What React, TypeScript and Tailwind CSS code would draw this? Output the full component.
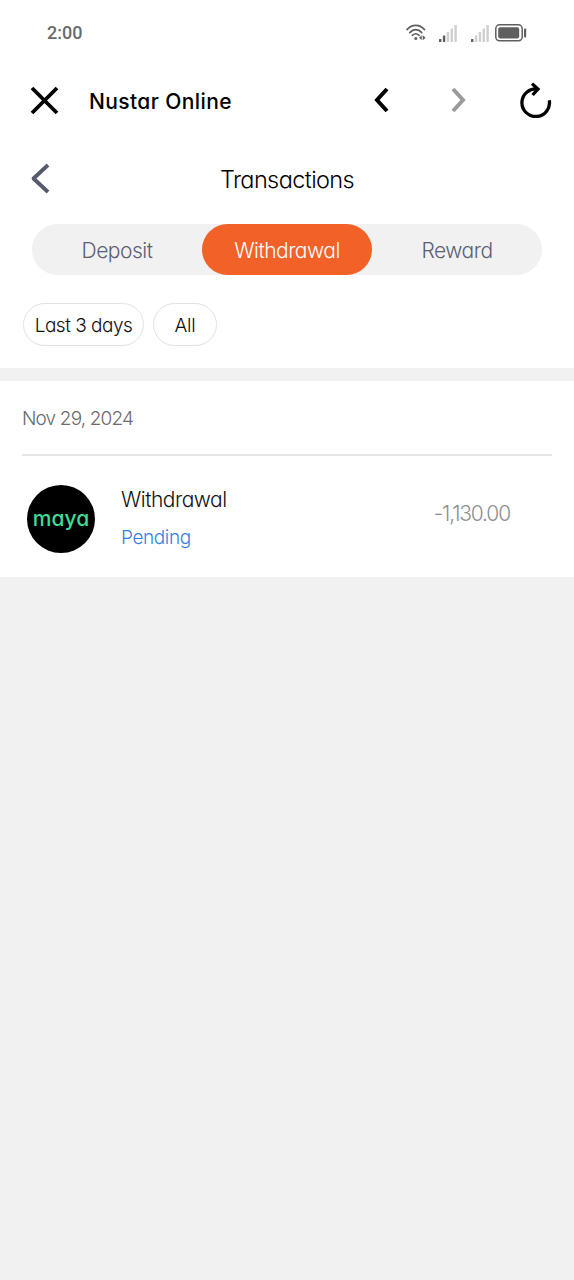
import { useState } from "react";
import clsx from "clsx";

const TABS = ["Deposit", "Withdrawal", "Reward"];

function SignalIcon({ active }: { active: number }) {
    const bars = [3, 6.5, 10, 13.5, 17];
    return (
        <svg width="18" height="17" viewBox="0 0 18 17">
            {bars.map((h, i) => (
                <rect
                    key={h}
                    x={i * 3.85}
                    y={17 - h}
                    width="2.4"
                    height={h}
                    rx="0.6"
                    fill={i < active ? "#5f5f5f" : "#cfcfcf"}
                />
            ))}
        </svg>
    );
}

function WifiIcon() {
    return (
        <svg width="21" height="18" viewBox="0 0 21 18" fill="none" stroke="#5f5f5f" strokeWidth="1.6" strokeLinecap="round">
            <path d="M1 5.6C6 0 13.5 0 18.5 5.6" />
            <path d="M3.7 8.6C7.4 4.6 12.1 4.6 15.8 8.6" />
            <path d="M6.4 11.4C8.5 9.3 11 9.3 13.1 11.4" />
            <circle cx="9.8" cy="14.6" r="1.5" fill="#5f5f5f" stroke="none" />
            <path d="M15.7 11.3v5l-2.6-2.5zM16.7 11.3v5l2.9-2.5z" fill="#5f5f5f" stroke="none" />
        </svg>
    );
}

function BatteryIcon() {
    return (
        <svg width="32" height="18" viewBox="0 0 32 18">
            <rect x="0.8" y="0.8" width="26.4" height="16" rx="3.8" fill="none" stroke="#5f5f5f" strokeWidth="1.5" />
            <rect x="3.2" y="3.2" width="21" height="11.2" rx="1.8" fill="#5f5f5f" />
            <rect x="29" y="4.4" width="2.2" height="9" rx="0.9" fill="#5f5f5f" />
        </svg>
    );
}

function StatusBar() {
    return (
        <div className="flex h-[66px] items-center justify-between px-[47px] text-[#6a6a6a]">
            <span className="font-[Roboto,sans-serif] text-[18px] font-medium leading-none">2:00</span>
            <div className="flex items-center">
                <WifiIcon />
                <div className="ml-[12px] flex items-center gap-[14px]">
                    <SignalIcon active={2} />
                    <SignalIcon active={1} />
                </div>
                <div className="ml-[6px]">
                    <BatteryIcon />
                </div>
            </div>
        </div>
    );
}

function BrowserBar() {
    return (
        <div className="flex h-[68px] items-center pl-[30px] pr-[22px] text-black">
            <button aria-label="Close">
                <svg width="29" height="29" viewBox="0 0 29 29" fill="none" stroke="currentColor" strokeWidth="3.8">
                    <path d="M2 2L27 27M27 2L2 27" />
                </svg>
            </button>
            <span className="ml-[30px] flex-1 whitespace-nowrap pt-[2px] text-[21px] font-medium leading-none tracking-[0.4px]">
                Nustar Online
            </span>
            <button aria-label="Previous page" className="mr-[62px]">
                <svg width="16" height="26" viewBox="0 0 16 26" fill="none" stroke="currentColor" strokeWidth="4">
                    <path d="M14 2L4 13L14 24" />
                </svg>
            </button>
            <button aria-label="Next page" className="mr-[52px] text-[#9b9b9b]" disabled>
                <svg width="16" height="26" viewBox="0 0 16 26" fill="none" stroke="currentColor" strokeWidth="4">
                    <path d="M2 2L12 13L2 24" />
                </svg>
            </button>
            <button aria-label="Reload">
                <svg width="33" height="36" viewBox="0 0 33 36" fill="none" stroke="currentColor" strokeWidth="3.3">
                    <path d="M30.3 18.3A13.8 13.8 0 1 1 18.5 7" />
                    <path d="M13 1.6L19 7.2L13.6 13" />
                </svg>
            </button>
        </div>
    );
}

export default function App() {
    const [tab, setTab] = useState("Withdrawal");

    return (
        <div className="flex min-h-screen flex-col bg-[#f1f1f1] font-[Inter,sans-serif] [font-feature-settings:'cv11'] [font-weight:360]">
            <div className="bg-white">
                <StatusBar />
                <BrowserBar />

                {/* Page title */}
                <div className="grid h-[90px] grid-cols-[60px_1fr_60px] items-center">
                    <button aria-label="Back" className="pl-[30px] text-[#555a6d]">
                        <svg width="20" height="32" viewBox="0 0 20 32" fill="none" stroke="currentColor" strokeWidth="3.8" strokeLinejoin="round">
                            <path d="M18 2L3.5 15.5L18 29" />
                        </svg>
                    </button>
                    <h1 className="pt-[2px] text-center text-[23.5px] leading-none tracking-[-0.6px] text-black [font-weight:360]">Transactions</h1>
                </div>

                {/* Tabs */}
                <div className="mx-[32px] grid h-[51px] grid-cols-3 rounded-full bg-[#f1f1f1]">
                    {TABS.map((name) => (
                        <button
                            key={name}
                            onClick={() => setTab(name)}
                            className={clsx(
                                "rounded-full pt-[2px] text-[21px] leading-none tracking-[-0.5px]",
                                tab === name ? "bg-[#f26127] text-white" : "text-[#5c6070]"
                            )}
                        >
                            {name}
                        </button>
                    ))}
                </div>

                {/* Filters */}
                <div className="flex gap-[9px] px-[23px] pb-[22px] pt-[28px] text-[#111]">
                    <button className="h-[43px] w-[121px] whitespace-nowrap rounded-full border-[1.5px] border-[#e2e2e2] pt-[3px] text-[19px] tracking-[-0.5px]">
                        Last 3 days
                    </button>
                    <button className="h-[43px] w-[64px] rounded-full border-[1.5px] border-[#e2e2e2] pt-[3px] text-[19px] tracking-[-0.3px]">
                        All
                    </button>
                </div>
            </div>

            {/* Transactions grouped by day */}
            <div className="mt-[13px] h-[196px] bg-white px-[22px]">
                <div className="flex h-[75px] items-center border-b-2 border-[#e6e6e6] pt-[3px] text-[19px] tracking-[-0.85px] text-[#6b6b6b]">
                    Nov 29, 2024
                </div>
                <div className="flex pl-[5px] pr-[42px] pt-[29px]">
                    <div className="flex size-[68px] items-center justify-center rounded-full bg-black">
                        <span className="-mt-[2px] text-[21px] font-medium leading-none text-[#3ddc97]">maya</span>
                    </div>
                    <div className="ml-[26px] flex-1">
                        <div className="mt-[3px] text-[21px] leading-[24px] tracking-[-0.5px] text-[#111]">Withdrawal</div>
                        <div className="mt-[14px] text-[19px] leading-[24px] tracking-[-0.4px] text-[#3380e0]">Pending</div>
                    </div>
                    <div className="mt-[17px] text-[21px] leading-[24px] tracking-[-1.15px] text-[#8f8f8f]">-1,130.00</div>
                </div>
            </div>
        </div>
    );
}
